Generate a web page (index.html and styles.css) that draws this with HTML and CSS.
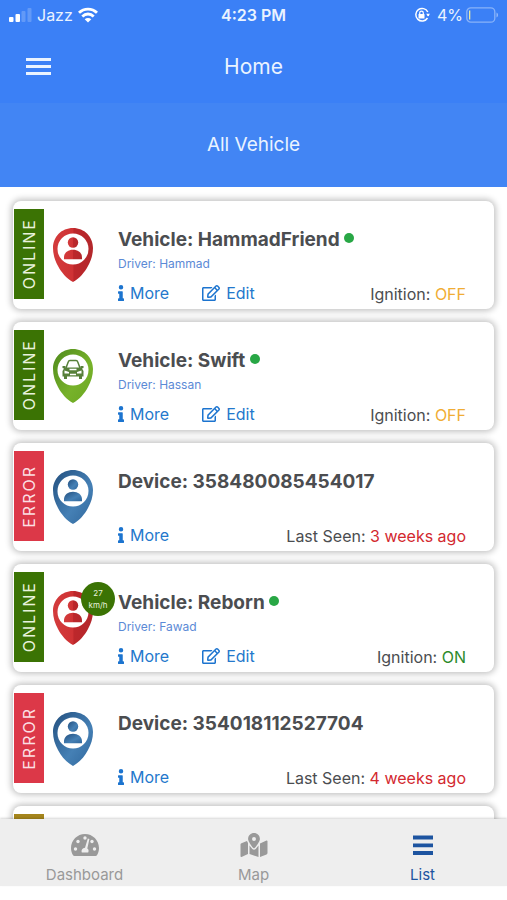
FILE: index.html
```
<!DOCTYPE html>
<html lang="en">
<head>
<meta charset="utf-8">
<meta name="viewport" content="width=device-width, initial-scale=1">
<title>Home</title>
<link rel="stylesheet" href="styles.css">
</head>
<body>
<svg class="defs" aria-hidden="true">
  <defs>
    <linearGradient id="red" x1="0" y1="0" x2="1" y2="0"><stop offset="0" stop-color="#d33b3c"/><stop offset=".5" stop-color="#cf3234"/><stop offset=".52" stop-color="#bd272b"/><stop offset="1" stop-color="#b3272b"/></linearGradient>
    <linearGradient id="green" x1="0" y1="0" x2="1" y2="1"><stop offset="0" stop-color="#4f8a1c"/><stop offset=".6" stop-color="#77b22a"/><stop offset="1" stop-color="#6aa621"/></linearGradient>
    <linearGradient id="blue" x1="0" y1="0" x2="1" y2="1"><stop offset="0" stop-color="#234f7e"/><stop offset=".6" stop-color="#4580b5"/><stop offset="1" stop-color="#2f669b"/></linearGradient>
  </defs>
  <symbol id="pin" viewBox="0 0 40 54"><path d="M20 0C8.500 0 0 8.800 0 20c0 6.500 2 12.500 5 18 3.500 6.500 8 12 15 16 7-4 11.500-9.500 15-16 3-5.500 5-11.500 5-18C40 8.800 31.500 0 20 0Z"/><circle cx="20" cy="21" r="15.500" fill="#fff"/></symbol>
  <symbol id="person" viewBox="0 0 40 54"><circle cx="20" cy="14.500" r="5.200"/><path d="M11 31.300v-2c0-4.500 4-7.500 9-7.500s9 3 9 7.500v2Z"/></symbol>
  <symbol id="car" viewBox="0 0 40 54"><path d="M13 19 15.300 12.800q.4-1.200 1.600-1.200h6.200q1.200 0 1.600 1.200L27 19" fill="none" stroke="#57803a" stroke-width="1.500"/><path d="M9.500 17h3v1.500h15V17h3v2l-1.500.5 1.500 2.500v5.500h-1.500V30h-3v-2.500H14V30h-3v-2.500H9.500V22l1.500-2.500-1.500-.5Z" fill="#57803a"/><path d="M11.500 21.500 16 23v1.500h-4.500Zm17 0L24 23v1.500h4.500Z" fill="#fff"/><path d="M16.500 20.500h7M17 25.500h6" stroke="#fff" stroke-width="1.300"/></symbol>
  <symbol id="info" viewBox="0 0 192 512"><path d="M20 424h20V280H20c-11 0-20-9-20-20v-44c0-11 9-20 20-20h112c11 0 20 9 20 20v208h20c11 0 20 9 20 20v48c0 11-9 20-20 20H20c-11 0-20-9-20-20v-48c0-11 9-20 20-20ZM96 0a72 72 0 1 0 0 144A72 72 0 0 0 96 0Z"/></symbol>
  <symbol id="edit" viewBox="0 0 576 512"><path d="M402.300 344.900l32-32c5-5 13.700-1.500 13.700 5.700V464c0 26.500-21.500 48-48 48H48c-26.500 0-48-21.500-48-48V112c0-26.500 21.500-48 48-48h273.500c7.100 0 10.700 8.600 5.700 13.700l-32 32c-1.500 1.500-3.500 2.300-5.700 2.300H48v352h352V350.500c0-2.100.8-4.100 2.300-5.600zm156.600-201.800L296.300 405.700l-90.400 10c-26.200 2.900-48.500-19.200-45.600-45.600l10-90.400L432.900 17.100c22.900-22.900 59.900-22.900 82.700 0l43.200 43.200c22.900 22.900 22.900 60 .1 82.800zM460.100 174L402 115.900 216.200 301.800l-7.300 65.300 65.300-7.300L460.100 174zm64.800-79.700l-43.200-43.200c-4.100-4.100-10.800-4.100-14.800 0L436 82l58.100 58.100 30.900-30.900c4-4.200 4-10.800-.1-14.900z"/></symbol>
</svg>

<header class="header">
  <div class="status">
    <div class="carrier">
      <svg class="signal" viewBox="0 0 24 16"><rect x="1" y="10" width="4.500" height="5" rx="1"/><rect x="7.500" y="7" width="4.500" height="8" rx="1"/><g opacity=".2"><rect x="13.500" y="4" width="4" height="11" rx="1"/><rect x="19.500" y="1" width="4" height="14" rx="1"/></g></svg>
      <span>Jazz</span>
      <svg class="wifi" viewBox="0 0 20 16"><g fill="none" stroke="#fff" stroke-width="2.800"><path d="M1 5.800C6 .8 14 .8 19 5.800"/><path d="M4.300 9.400c3.300-3.200 8.100-3.200 11.400 0"/></g><path d="M10 15.500 6.700 12.200c1.900-1.700 4.700-1.700 6.600 0Z"/></svg>
    </div>
    <div class="clock">4:23 PM</div>
    <div class="power">
      <svg class="lock" viewBox="0 0 16 16"><path d="M13.800 5A6.300 6.300 0 1 0 13.500 11M14.300 7.500V9" fill="none" stroke="#fff" stroke-width="1.500"/><path d="M12.200 6.800h3.800L14 9.600Z"/><rect x="4.500" y="7" width="6" height="4.500" rx=".6"/><path d="M5.700 7.500V6a1.800 1.800 0 0 1 3.600 0v1.500" fill="none" stroke="#fff" stroke-width="1.200"/></svg>
      <span>4%</span>
      <svg class="battery" viewBox="0 0 33 16"><rect x=".8" y=".8" width="28" height="14.400" rx="4" fill="none" stroke="#fff" stroke-opacity=".4" stroke-width="1.300"/><rect x="3" y="3.500" width="1.300" height="9" fill="#e9e8a0"/><path d="M30.500 5.500c2 .8 2 4.200 0 5Z" opacity=".45"/></svg>
    </div>
  </div>
  <div class="toolbar">
    <button class="menu" type="button" aria-label="Menu"><span></span><span></span><span></span></button>
    <h1>Home</h1>
  </div>
</header>
<div class="band">All Vehicle</div>

<main class="list">
  <article class="card">
    <div class="state online"><span>ONLINE</span></div>
    <div class="marker"><svg class="pin" fill="url(#red)"><use href="#pin"/><use href="#person"/></svg></div>
    <div class="info">
      <h2>Vehicle: HammadFriend <i class="dot"></i></h2>
      <p class="driver">Driver: Hammad</p>
      <div class="foot">
        <a href="#more"><svg class="i-info"><use href="#info"/></svg>More</a>
        <a href="#edit"><svg class="i-edit"><use href="#edit"/></svg>Edit</a>
        <p class="seen">Ignition: <b class="off">OFF</b></p>
      </div>
    </div>
  </article>
  <article class="card">
    <div class="state online"><span>ONLINE</span></div>
    <div class="marker"><svg class="pin" fill="url(#green)"><use href="#pin"/><use href="#car"/></svg></div>
    <div class="info">
      <h2>Vehicle: Swift <i class="dot"></i></h2>
      <p class="driver">Driver: Hassan</p>
      <div class="foot">
        <a href="#more"><svg class="i-info"><use href="#info"/></svg>More</a>
        <a href="#edit"><svg class="i-edit"><use href="#edit"/></svg>Edit</a>
        <p class="seen">Ignition: <b class="off">OFF</b></p>
      </div>
    </div>
  </article>
  <article class="card">
    <div class="state error"><span>ERROR</span></div>
    <div class="marker"><svg class="pin" fill="url(#blue)"><use href="#pin"/><use href="#person"/></svg></div>
    <div class="info">
      <h2>Device: 358480085454017</h2>
      <div class="foot">
        <a href="#more"><svg class="i-info"><use href="#info"/></svg>More</a>
        <p class="seen">Last Seen: <b class="late">3 weeks ago</b></p>
      </div>
    </div>
  </article>
  <article class="card">
    <div class="state online"><span>ONLINE</span></div>
    <div class="marker"><svg class="pin" fill="url(#red)"><use href="#pin"/><use href="#person"/></svg><div class="speed"><span>27</span><span>km/h</span></div></div>
    <div class="info">
      <h2>Vehicle: Reborn <i class="dot"></i></h2>
      <p class="driver">Driver: Fawad</p>
      <div class="foot">
        <a href="#more"><svg class="i-info"><use href="#info"/></svg>More</a>
        <a href="#edit"><svg class="i-edit"><use href="#edit"/></svg>Edit</a>
        <p class="seen">Ignition: <b class="on">ON</b></p>
      </div>
    </div>
  </article>
  <article class="card">
    <div class="state error"><span>ERROR</span></div>
    <div class="marker"><svg class="pin" fill="url(#blue)"><use href="#pin"/><use href="#person"/></svg></div>
    <div class="info">
      <h2>Device: 354018112527704</h2>
      <div class="foot">
        <a href="#more"><svg class="i-info"><use href="#info"/></svg>More</a>
        <p class="seen">Last Seen: <b class="late">4 weeks ago</b></p>
      </div>
    </div>
  </article>
  <article class="card">
    <div class="state idle"></div>
  </article>
</main>

<nav class="tabs">
  <a href="#dashboard"><svg viewBox="0 0 28 24"><path d="M14 1C6.300 1 0 7.300 0 15c0 2.600.7 5 1.900 7 .3.600.9 1 1.600 1h21c.7 0 1.300-.4 1.600-1 1.200-2 1.900-4.400 1.900-7C28 7.300 21.700 1 14 1Z"/><g fill="#eee"><circle cx="14" cy="5" r="1.700"/><circle cx="7" cy="8.500" r="1.700"/><circle cx="21" cy="8.500" r="1.700"/><circle cx="4.500" cy="16" r="1.700"/><circle cx="23.500" cy="16" r="1.700"/><path d="m16.800 5.500 1.600.5-2.100 9.500c1.300.8 1.700 2.200.9 4h-6.400c-.8-2.500.7-4.500 3.200-4.700Z"/></g></svg>Dashboard</a>
  <a href="#map"><svg viewBox="0 0 576 512"><path d="M288 0c-69.600 0-126 56.400-126 126 0 56.300 82.400 158.800 113.900 196.100 6.400 7.500 17.800 7.500 24.200 0C331.600 284.800 414 182.300 414 126 414 56.400 357.600 0 288 0zm0 168a42 42 0 1 1 0-84 42 42 0 0 1 0 84zM20.100 216A32 32 0 0 0 0 245.700V496c0 11.300 11.400 19.100 21.900 14.900L160 448V214.900c-8.800-16-16.100-31.500-21.300-46.400zM288 359.700c-14.100 0-27.400-6.200-36.500-17-19.700-23.200-40.600-49.600-59.500-76.700v182l192 64V266c-18.900 27.100-39.800 53.500-59.500 76.700-9.100 10.800-22.400 17-36.500 17zm266.100-198.500L416 224v288l139.900-56A32 32 0 0 0 576 426.300V176c0-11.300-11.400-19-21.900-14.800z"/></svg>Map</a>
  <a class="active" href="#list" aria-current="page"><svg viewBox="0 0 28 24"><path d="M4 4.500h20M4 12.300h20M4 20h20" fill="none" stroke="currentColor" stroke-width="3.800" stroke-linecap="butt"/></svg>List</a>
</nav>
</body>
</html>
```
FILE: styles.css
```
* { box-sizing: border-box; }

body {
  margin: 0;
  padding-bottom: 14px;
  height: 100vh;
  display: flex;
  flex-direction: column;
  overflow: hidden;
  background: #fff;
  color: #4b4d50;
  font-family: Inter, "Liberation Sans", sans-serif;
}

h1, h2, p { margin: 0; }
a { color: inherit; text-decoration: none; }
svg { display: block; }
.defs { position: absolute; width: 0; height: 0; }

.header { flex: none; background: #3b80f6; color: #eaf3ff; }

.status {
  display: grid;
  grid-template-columns: 1fr auto 1fr;
  align-items: center;
  height: 29px;
  padding: 0 8px;
  font-size: 16px;
}
.status svg { height: 16px; fill: #fff; }
.carrier, .power { display: flex; align-items: center; gap: 5px; }
.power { justify-content: flex-end; gap: 3px; }
.signal { width: 24px; }
.wifi { width: 20px; }
.lock { width: 16px; margin-right: 4px; }
.battery { width: 33px; }
.clock { font-weight: 600; }

.toolbar {
  display: grid;
  grid-template-columns: 1fr auto 1fr;
  align-items: center;
  height: 74px;
  padding: 0 26px;
}
.toolbar h1 { font-size: 21px; font-weight: 400; }
.menu {
  justify-self: start;
  display: flex;
  flex-direction: column;
  gap: 4px;
  width: 25px;
  padding: 0;
  border: 0;
  background: none;
}
.menu span { height: 3px; background: #eaf3ff; }

.band {
  flex: none;
  height: 84px;
  line-height: 84px;
  text-align: center;
  background: #4285f4;
  color: #eaf3ff;
  font-size: 19px;
}

.list {
  flex: 1;
  min-height: 0;
  overflow: hidden;
  display: flex;
  flex-direction: column;
  gap: 13px;
  padding: 14px 13px 0;
}

.card {
  flex: none;
  display: flex;
  min-height: 108px;
  padding: 8px 0 5px 1px;
  border-radius: 8px;
  background: #fff;
  box-shadow: 0 0 6px 2px rgba(0, 0, 0, .24);
}

.state {
  flex: none;
  display: flex;
  align-items: center;
  justify-content: center;
  width: 30px;
  height: 90px;
  color: #e8f2dc;
  font-size: 16px;
}
.state span { writing-mode: vertical-rl; rotate: 180deg; letter-spacing: 2px; }
.online { background: #3b7304; }
.error { background: #dc3848; color: #fbdfe2; }
.idle { background: #a5851c; }

.marker { position: relative; flex: none; padding: 19px 25px 0 9px; }
.pin { width: 40px; height: 54px; }
.speed {
  position: absolute;
  top: 10px;
  right: 3px;
  display: flex;
  flex-direction: column;
  align-items: center;
  justify-content: center;
  width: 34px;
  height: 34px;
  border-radius: 50%;
  background: #3b7304;
  color: #e8f2dc;
  font-size: 8px;
  line-height: 12px;
}

.info {
  flex: 1;
  display: flex;
  flex-direction: column;
  padding: 19px 28px 0 0;
}
.info h2 { font-size: 19px; line-height: 24px; font-weight: 700; }
.dot {
  display: inline-block;
  width: 10px;
  height: 10px;
  border-radius: 50%;
  background: #28a745;
  vertical-align: 3px;
}
.driver { margin-top: 4px; font-size: 12px; line-height: 16px; color: #5b8ad6; }

.foot {
  display: flex;
  align-items: center;
  gap: 33px;
  margin-top: auto;
  font-size: 16px;
  line-height: 20px;
}
.foot a { display: flex; align-items: center; gap: 6px; color: #2478cc; }
.foot svg { height: 16px; fill: #1c74cf; }
.i-info { width: 6px; }
.i-edit { width: 18px; }
.seen { margin-left: auto; padding-top: 3px; }
.seen b { font-weight: 400; }
.off { color: #f0ad35; }
.on { color: #2c8a2c; }
.late { color: #d3282f; }

.tabs {
  flex: none;
  position: relative;
  display: grid;
  grid-template-columns: repeat(3, 1fr);
  height: 67px;
  background: #eee;
  box-shadow: 0 -1px 2px rgba(0, 0, 0, .16);
  color: #999;
  font-size: 15px;
  line-height: 20px;
}
.tabs a {
  display: flex;
  flex-direction: column;
  align-items: center;
  gap: 8px;
  padding-top: 14px;
}
.tabs svg { width: 28px; height: 24px; fill: currentColor; }
.tabs .active { color: #1d54a0; }
```
